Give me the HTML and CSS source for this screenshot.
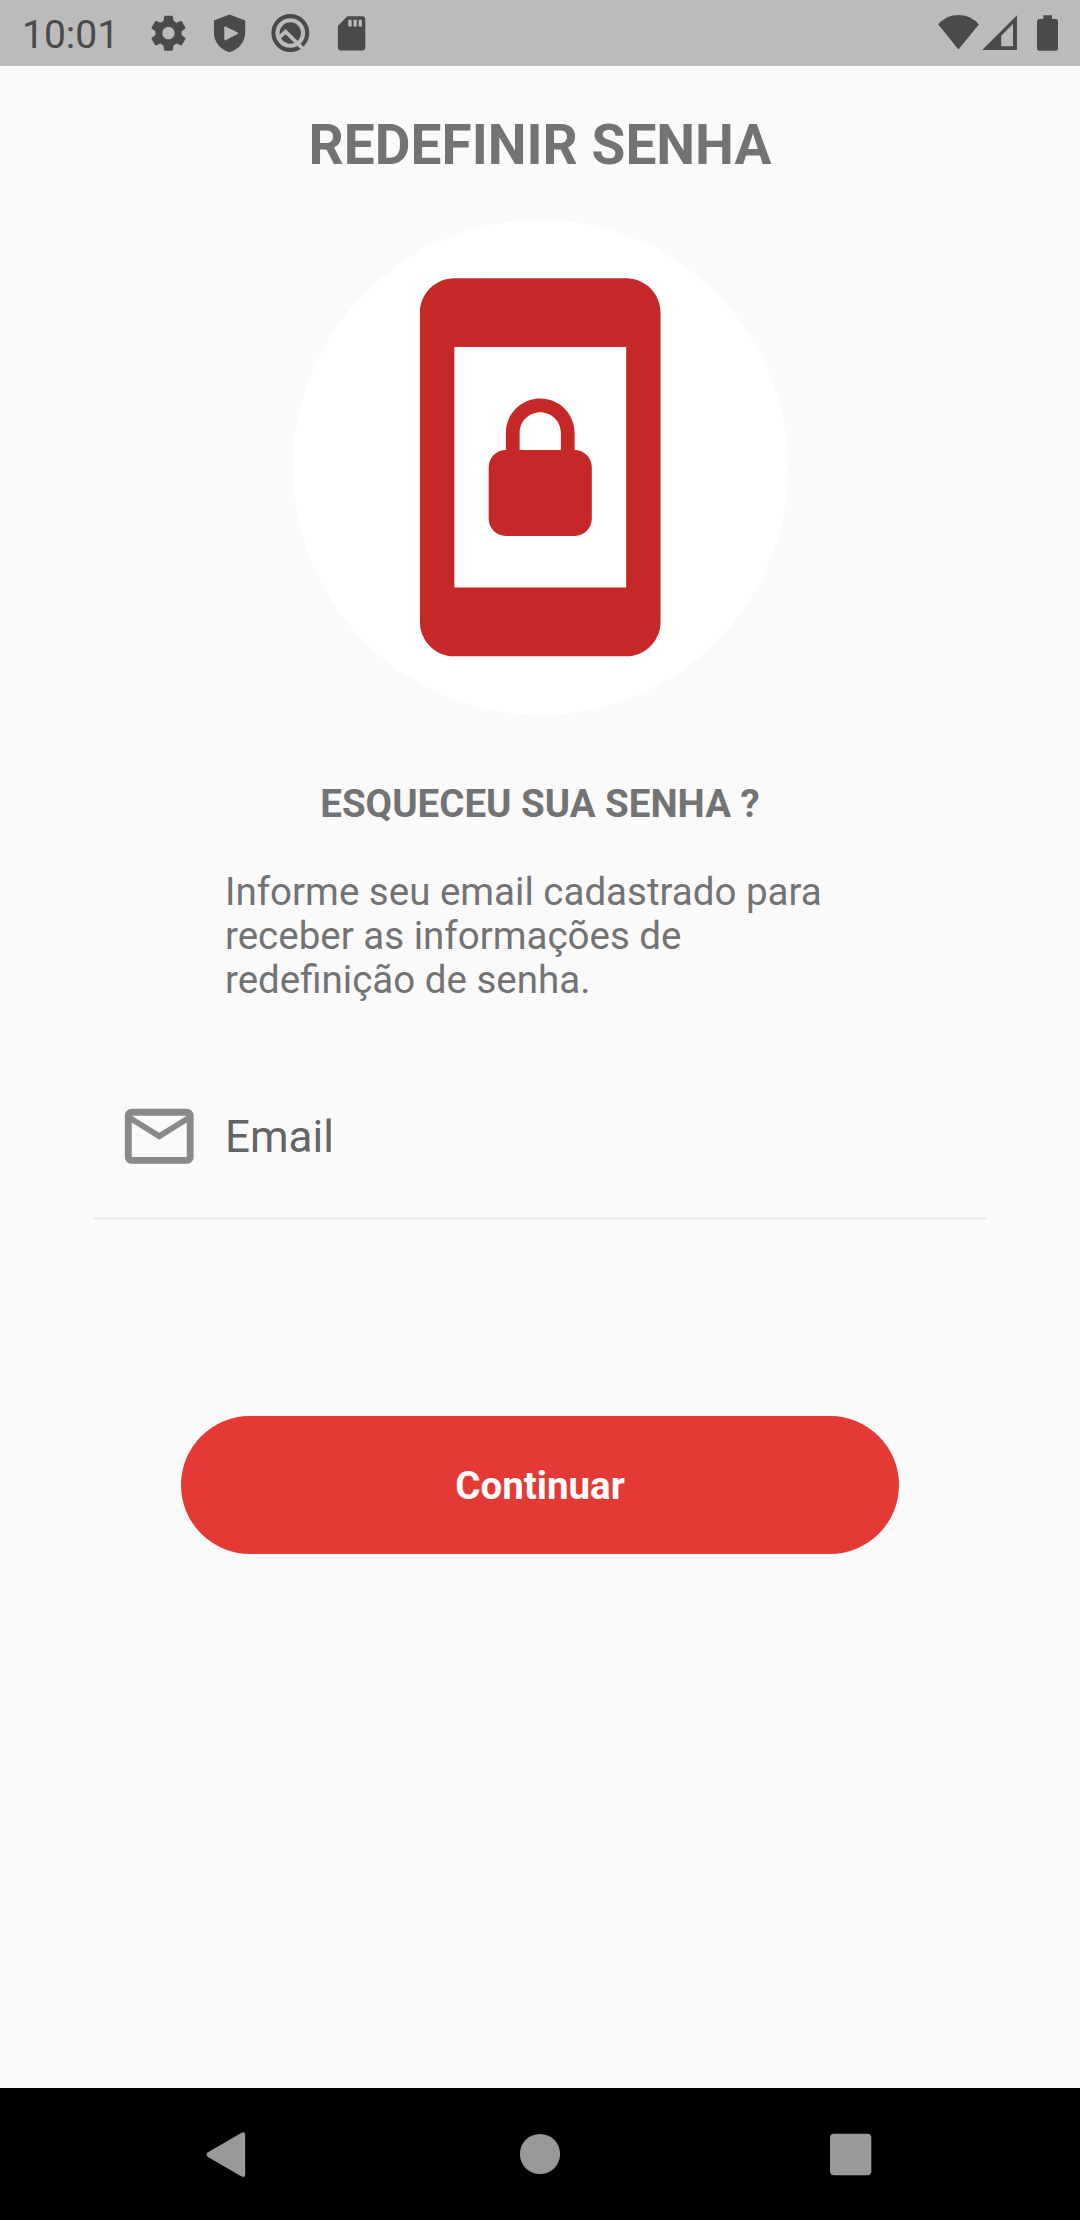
FILE: index.html
```html
<!DOCTYPE html>
<html lang="pt-BR">
<head>
<meta charset="utf-8">
<title>Redefinir senha</title>
<link rel="stylesheet" href="styles.css">
</head>
<body>
<div class="screen">
  <header class="status">
    <span class="clock">10:01</span>
    <svg class="notifications" viewBox="148 0 222 66" width="222" height="66">
      <path transform="translate(147.5 12.2) scale(1.75)" d="M19.43 12.98c.04-.32.07-.64.07-.98s-.03-.66-.07-.98l2.11-1.65c.19-.15.24-.42.12-.64l-2-3.46c-.12-.22-.39-.3-.61-.22l-2.49 1c-.52-.4-1.08-.73-1.69-.98l-.38-2.65C14.46 2.18 14.25 2 14 2h-4c-.25 0-.46.18-.49.42l-.38 2.65c-.61.25-1.17.59-1.69.98l-2.49-1c-.23-.09-.49 0-.61.22l-2 3.46c-.13.22-.07.49.12.64l2.11 1.65c-.04.32-.07.65-.07.98s.03.66.07.98l-2.11 1.65c-.19.15-.24.42-.12.64l2 3.46c.12.22.39.3.61.22l2.49-1c.52.4 1.08.73 1.69.98l.38 2.65c.03.24.24.42.49.42h4c.25 0 .46-.18.49-.42l.38-2.65c.61-.25 1.17-.59 1.69-.98l2.49 1c.23.09.49 0 .61-.22l2-3.46c.12-.22.07-.49-.12-.64l-2.11-1.65zM12 15.5c-1.93 0-3.5-1.57-3.5-3.5s1.57-3.5 3.5-3.5 3.5 1.57 3.5 3.5-1.57 3.5-3.5 3.5z"/>
      <path fill-rule="evenodd" d="M229.5 14.5 245.2 20.6V32C245.2 42 239 49.5 229.5 52.3 220 49.5 213.9 42 213.9 32V20.6ZM224.3 27.2V39.6Q224.3 40.8 225.5 40.2L237.6 34Q238.8 33.3 237.6 32.6L225.5 26.6Q224.3 26 224.3 27.2Z"/>
      <g>
        <circle cx="290.3" cy="33" r="16.9" fill="none" stroke="#4a4a4a" stroke-width="4.1"/>
        <circle cx="290.3" cy="33" r="10.7"/>
        <path d="M278.5 38.5 285.5 31.6 303.5 49.3" fill="none" stroke="#bbb" stroke-width="3.6"/>
      </g>
      <path fill-rule="evenodd" d="M347.3 16.2H362.3Q365.3 16.2 365.3 19.2V47.6Q365.3 50.6 362.3 50.6H340.9Q337.9 50.6 337.9 47.6V26ZM348.3 19.8V26.6H351.6V19.8ZM353.5 19.8V26.6H356.8V19.8ZM358.6 19.8V26.6H361.9V19.8Z"/>
    </svg>
    <svg class="system" viewBox="936 0 124 66" width="124" height="66">
      <path d="M938.2 24.4C949 12 968 12 978.8 24.4L958.5 49.4Z"/>
      <path fill-rule="evenodd" d="M982.2 50 1017 15.2V50ZM1001.2 46.2H1013V24L1001.2 35.8Z"/>
      <path d="M1043.3 15.2H1052V19H1055.6Q1058 19 1058 21.4V48.4Q1058 50.8 1055.6 50.8H1039.4Q1037 50.8 1037 48.4V21.4Q1037 19 1039.4 19H1043.3Z"/>
    </svg>
  </header>

  <main class="content">
    <h1 class="title">REDEFINIR SENHA</h1>
    <div class="badge">
      <svg class="badge-icon" viewBox="0 0 24 24"><path d="M10 16h4c.55 0 1-.45 1-1v-3c0-.55-.45-1-1-1v-1c0-1.11-.9-2-2-2-1.11 0-2 .9-2 2v1c-.55 0-1 .45-1 1v3c0 .55.45 1 1 1zm.8-6c0-.66.54-1.2 1.2-1.2.66 0 1.2.54 1.2 1.2v1h-2.4v-1zM17 1H7c-1.1 0-2 .9-2 2v18c0 1.1.9 2 2 2h10c1.1 0 2-.9 2-2V3c0-1.1-.9-2-2-2zm0 18H7V5h10v14z"/></svg>
    </div>
    <h2 class="subtitle">ESQUECEU SUA SENHA ?</h2>
    <p class="hint">Informe seu email cadastrado para receber as informações de redefinição de senha.</p>
    <div class="field">
      <svg class="field-icon" viewBox="0 0 24 24"><path d="M20 4H4c-1.1 0-2 .9-2 2v12c0 1.1.9 2 2 2h16c1.1 0 2-.9 2-2V6c0-1.1-.9-2-2-2zm0 14H4V8l8 5 8-5v10zm-8-7L4 6h16l-8 5z"/></svg>
      <span class="field-label">Email</span>
    </div>
    <button class="submit" type="button">Continuar</button>
  </main>

  <nav class="navbar">
    <svg viewBox="0 0 1080 132" width="1080" height="132">
      <path d="M208 64.2 241.2 45Q245.2 43 245.2 47V86Q245.2 90.4 241.2 88.2L208 69Q205 66.6 208 64.2Z"/>
      <circle cx="540" cy="66" r="20.1"/>
      <rect x="830" y="45.8" width="41.3" height="41.4" rx="4"/>
    </svg>
  </nav>
</div>
</body>
</html>
```
FILE: styles.css
```css
* { box-sizing: border-box; }
body {
  margin: 0;
  font-family: Roboto, sans-serif;
  background: #fafafa;
}
.screen {
  display: flex;
  flex-direction: column;
  width: 1080px;
  height: 2220px;
}
svg { display: block; }
.status {
  display: flex;
  align-items: center;
  height: 66px;
  padding: 0 20px 0 22px;
  background: #bbb;
  color: #4a4a4a;
  fill: #4a4a4a;
}
.clock {
  width: 126px;
  padding-top: 3px;
  font-size: 39px;
  line-height: 48px;
}
.system { margin-left: auto; }
.content {
  flex: 1;
  display: flex;
  flex-direction: column;
  align-items: center;
  padding-top: 47px;
  color: #737373;
}
.title {
  margin: 0;
  font-size: 55px;
  line-height: 64px;
  font-weight: 700;
}
.badge {
  display: flex;
  align-items: center;
  justify-content: center;
  width: 495px;
  height: 495px;
  margin-top: 43px;
  border-radius: 50%;
  background: #fff;
}
.badge-icon {
  width: 412.5px;
  height: 412.5px;
  fill: #c62828;
}
.subtitle {
  margin: 67px 0 0;
  font-size: 38.5px;
  line-height: 44px;
  font-weight: 700;
}
.hint {
  align-self: flex-start;
  width: 632px;
  margin: 44px 0 0 225px;
  font-size: 38.5px;
  line-height: 44px;
}
.field {
  display: flex;
  align-items: center;
  width: 894px;
  height: 164px;
  margin-top: 54px;
  padding: 0 24.8px 0 25px;
  border-bottom: 3px solid #eee;
}
.field-icon {
  width: 82.5px;
  height: 82.5px;
  margin-right: 24.5px;
  fill: #898989;
}
.field-label {
  font-size: 44px;
  line-height: 52px;
  color: #646464;
}
.submit {
  width: 717.5px;
  height: 137.5px;
  margin-top: 196px;
  padding: 2px 0 0;
  border: 0;
  border-radius: 69px;
  background: #e53935;
  color: #fff;
  font: 700 38.5px/44px Roboto, sans-serif;
}
.navbar {
  height: 132px;
  background: #000;
  fill: #999;
}
```
